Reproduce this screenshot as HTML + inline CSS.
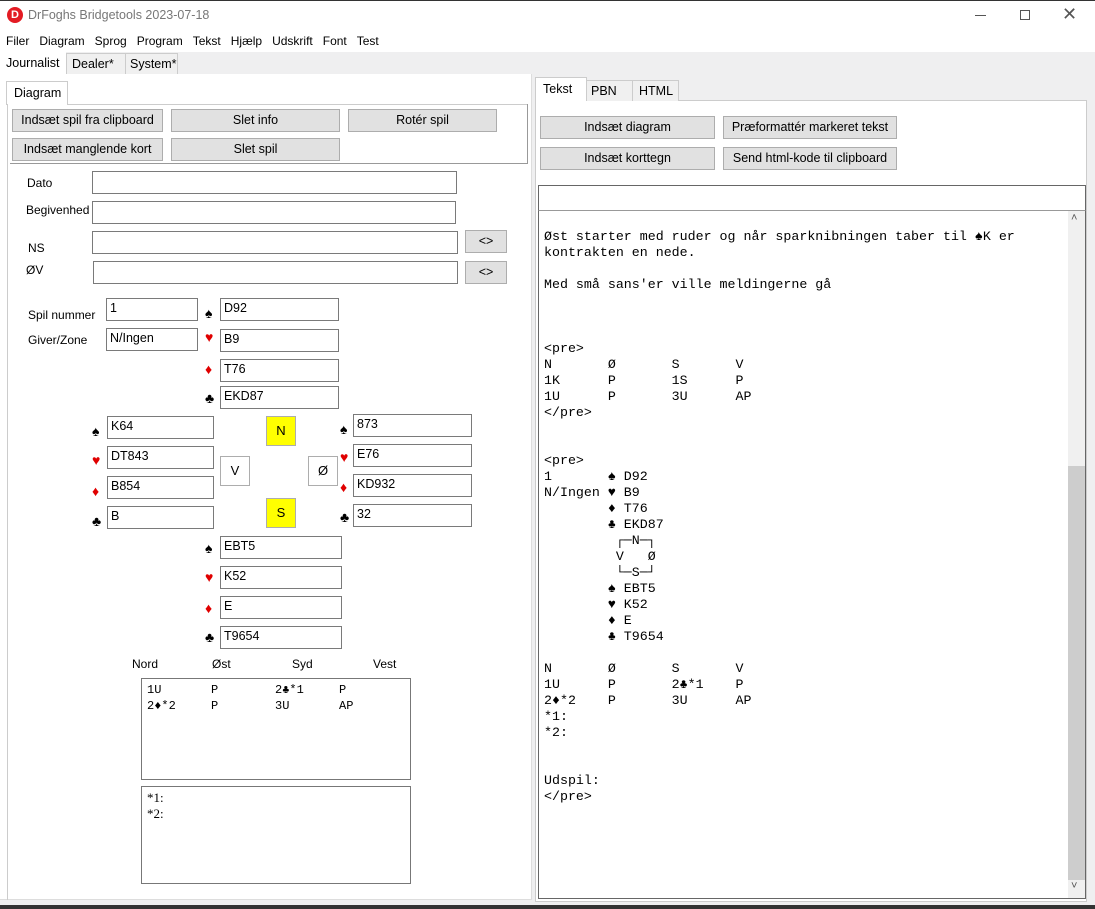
<!DOCTYPE html>
<html><head><meta charset="utf-8"><style>
*{margin:0;padding:0;box-sizing:border-box}
body{width:1095px;height:909px;position:relative;overflow:hidden;background:#efeff0;font-family:"Liberation Sans",Tahoma,sans-serif;font-size:12px;color:#000}
.a{position:absolute}
.t{position:absolute;white-space:nowrap}
.in{position:absolute;background:#fff;border:1px solid #7a7a7a;padding:2px 3px;font-size:12.5px}
.btn{position:absolute;background:#e1e1e1;border:1px solid #adadad;text-align:center;font-size:12.5px;line-height:20px}
.su{position:absolute;font-size:14px;line-height:14px}
.r{color:#e00000}
.mono{font-family:"Liberation Mono","Courier New",monospace;font-size:13.3px;line-height:16px;white-space:pre}
.box{position:absolute;width:30px;height:30px;border:1px solid #adadad;background:#fff;text-align:center;line-height:28px;font-size:13px}
</style></head><body>
<div class="a" style="left:0;top:0;width:1095px;height:52px;background:#fff"></div>
<div class="a" style="left:0;top:0;width:1095px;height:1px;background:#333"></div>
<div class="a" style="left:7px;top:7px;width:16px;height:16px;border-radius:50%;background:#e31b23;color:#fff;font-weight:bold;font-size:11px;text-align:center;line-height:16px">D</div>
<div class="t" style="left:28px;top:8px;font-size:12.5px;color:#777">DrFoghs Bridgetools 2023-07-18</div>
<div class="a" style="left:975px;top:15px;width:11px;height:1px;background:#555"></div>
<div class="a" style="left:1020px;top:10px;width:10px;height:10px;border:1px solid #555"></div>
<div class="t" style="left:1062px;top:4px;font-size:18px;color:#555;font-weight:lighter">✕</div>
<div class="t" style="left:6px;top:34px;font-size:12px">Filer&nbsp;&nbsp;&nbsp;Diagram&nbsp;&nbsp;&nbsp;Sprog&nbsp;&nbsp;&nbsp;Program&nbsp;&nbsp;&nbsp;Tekst&nbsp;&nbsp;&nbsp;Hjælp&nbsp;&nbsp;&nbsp;Udskrift&nbsp;&nbsp;&nbsp;Font&nbsp;&nbsp;&nbsp;Test</div>
<!-- top tabs -->
<div class="a" style="left:0;top:52px;width:66px;height:24px;background:#fff"></div>
<div class="t" style="left:6px;top:56px;font-size:12.5px">Journalist</div>
<div class="a" style="left:66px;top:53px;width:60px;height:21px;border:1px solid #ccc;border-bottom:none;background:#f0f0f0"></div>
<div class="t" style="left:72px;top:57px;font-size:12.5px">Dealer*</div>
<div class="a" style="left:125px;top:53px;width:53px;height:21px;border:1px solid #ccc;border-bottom:none;background:#f0f0f0"></div>
<div class="t" style="left:130px;top:57px;font-size:12.5px">System*</div>
<!-- left panel -->
<div class="a" style="left:0;top:74px;width:532px;height:826px;background:#fff;border-right:1px solid #ddd;border-bottom:1px solid #ddd"></div>
<div class="a" style="left:6px;top:81px;width:62px;height:24px;border:1px solid #ccc;border-bottom:none;background:#fff"></div>
<div class="t" style="left:14px;top:86px;font-size:12.5px">Diagram</div>
<div class="a" style="left:7px;top:104px;width:1px;height:796px;background:#ccc"></div>
<div class="a" style="left:68px;top:104px;width:460px;height:1px;background:#ccc"></div>
<div class="a" style="left:10px;top:163px;width:518px;height:1px;background:#999"></div>
<div class="a" style="left:527px;top:104px;width:1px;height:60px;background:#999"></div>
<div class="btn" style="left:12px;top:109px;width:151px;height:23px">Indsæt spil fra clipboard</div>
<div class="btn" style="left:171px;top:109px;width:169px;height:23px">Slet info</div>
<div class="btn" style="left:348px;top:109px;width:149px;height:23px">Rotér spil</div>
<div class="btn" style="left:12px;top:138px;width:151px;height:23px">Indsæt manglende kort</div>
<div class="btn" style="left:171px;top:138px;width:169px;height:23px">Slet spil</div>
<div class="t" style="left:27px;top:176px">Dato</div>
<div class="in" style="left:92px;top:171px;width:365px;height:23px"></div>
<div class="t" style="left:26px;top:203px">Begivenhed</div>
<div class="in" style="left:92px;top:201px;width:364px;height:23px"></div>
<div class="t" style="left:28px;top:241px">NS</div>
<div class="in" style="left:92px;top:231px;width:366px;height:23px"></div>
<div class="btn" style="left:465px;top:230px;width:42px;height:23px;line-height:20px">&lt;&gt;</div>
<div class="t" style="left:26px;top:263px">ØV</div>
<div class="in" style="left:93px;top:261px;width:365px;height:23px"></div>
<div class="btn" style="left:465px;top:261px;width:42px;height:23px;line-height:20px">&lt;&gt;</div>
<div class="t" style="left:28px;top:308px">Spil nummer</div>
<div class="in" style="left:106px;top:298px;width:92px;height:23px">1</div>
<div class="t" style="left:28px;top:333px">Giver/Zone</div>
<div class="in" style="left:106px;top:328px;width:92px;height:23px">N/Ingen</div>
<!-- north -->
<div class="su" style="left:205px;top:306px">♠</div><div class="in" style="left:220px;top:298px;width:119px;height:23px">D92</div>
<div class="su r" style="left:205px;top:330px">♥</div><div class="in" style="left:220px;top:329px;width:119px;height:23px">B9</div>
<div class="su r" style="left:205px;top:362px">♦</div><div class="in" style="left:220px;top:359px;width:119px;height:23px">T76</div>
<div class="su" style="left:205px;top:391px">♣</div><div class="in" style="left:220px;top:386px;width:119px;height:23px">EKD87</div>
<!-- west -->
<div class="su" style="left:92px;top:424px">♠</div><div class="in" style="left:107px;top:416px;width:107px;height:23px">K64</div>
<div class="su r" style="left:92px;top:453px">♥</div><div class="in" style="left:107px;top:446px;width:107px;height:23px">DT843</div>
<div class="su r" style="left:92px;top:484px">♦</div><div class="in" style="left:107px;top:476px;width:107px;height:23px">B854</div>
<div class="su" style="left:92px;top:514px">♣</div><div class="in" style="left:107px;top:506px;width:107px;height:23px">B</div>
<!-- east -->
<div class="su" style="left:340px;top:422px">♠</div><div class="in" style="left:353px;top:414px;width:119px;height:23px">873</div>
<div class="su r" style="left:340px;top:450px">♥</div><div class="in" style="left:353px;top:444px;width:119px;height:23px">E76</div>
<div class="su r" style="left:340px;top:480px">♦</div><div class="in" style="left:353px;top:474px;width:119px;height:23px">KD932</div>
<div class="su" style="left:340px;top:510px">♣</div><div class="in" style="left:353px;top:504px;width:119px;height:23px">32</div>
<!-- south -->
<div class="su" style="left:205px;top:541px">♠</div><div class="in" style="left:220px;top:536px;width:122px;height:23px">EBT5</div>
<div class="su r" style="left:205px;top:570px">♥</div><div class="in" style="left:220px;top:566px;width:122px;height:23px">K52</div>
<div class="su r" style="left:205px;top:601px">♦</div><div class="in" style="left:220px;top:596px;width:122px;height:23px">E</div>
<div class="su" style="left:205px;top:630px">♣</div><div class="in" style="left:220px;top:626px;width:122px;height:23px">T9654</div>
<div class="box" style="left:266px;top:416px;background:#ffff00">N</div>
<div class="box" style="left:220px;top:456px">V</div>
<div class="box" style="left:308px;top:456px">Ø</div>
<div class="box" style="left:266px;top:498px;background:#ffff00">S</div>
<div class="t" style="left:132px;top:657px">Nord</div>
<div class="t" style="left:212px;top:657px">Øst</div>
<div class="t" style="left:292px;top:657px">Syd</div>
<div class="t" style="left:373px;top:657px">Vest</div>
<div class="a" style="left:141px;top:678px;width:270px;height:102px;border:1px solid #777;background:#fff"></div>
<div class="a mono" style="left:147px;top:682px;font-size:12px;line-height:16px">1U</div>
<div class="a mono" style="left:211px;top:682px;font-size:12px;line-height:16px">P</div>
<div class="a mono" style="left:275px;top:682px;font-size:12px;line-height:16px">2♣*1</div>
<div class="a mono" style="left:339px;top:682px;font-size:12px;line-height:16px">P</div>
<div class="a mono" style="left:147px;top:698px;font-size:12px;line-height:16px">2♦*2</div>
<div class="a mono" style="left:211px;top:698px;font-size:12px;line-height:16px">P</div>
<div class="a mono" style="left:275px;top:698px;font-size:12px;line-height:16px">3U</div>
<div class="a mono" style="left:339px;top:698px;font-size:12px;line-height:16px">AP</div>
<div class="a" style="left:141px;top:786px;width:270px;height:98px;border:1px solid #777;background:#fff"></div>
<div class="t" style="left:147px;top:790px;font-family:'Liberation Serif',serif;font-size:13px;line-height:16px">*1:<br>*2:</div>
<!-- right panel -->
<div class="a" style="left:535px;top:100px;width:552px;height:802px;background:#fff;border:1px solid #ccc"></div>
<div class="a" style="left:535px;top:77px;width:52px;height:24px;border:1px solid #ccc;border-bottom:none;background:#fff"></div>
<div class="t" style="left:543px;top:82px;font-size:12.5px">Tekst</div>
<div class="a" style="left:586px;top:80px;width:47px;height:21px;border:1px solid #ccc;border-bottom:none;background:#f0f0f0"></div>
<div class="t" style="left:591px;top:84px;font-size:12.5px">PBN</div>
<div class="a" style="left:632px;top:80px;width:47px;height:21px;border:1px solid #ccc;border-bottom:none;background:#f0f0f0"></div>
<div class="t" style="left:639px;top:84px;font-size:12.5px">HTML</div>
<div class="btn" style="left:540px;top:116px;width:175px;height:23px">Indsæt diagram</div>
<div class="btn" style="left:723px;top:116px;width:174px;height:23px">Præformattér markeret tekst</div>
<div class="btn" style="left:540px;top:147px;width:175px;height:23px">Indsæt korttegn</div>
<div class="btn" style="left:723px;top:147px;width:174px;height:23px">Send html-kode til clipboard</div>
<div class="a" style="left:538px;top:185px;width:548px;height:26px;border:1px solid #666;background:#fff"></div>
<div class="a" style="left:538px;top:210px;width:548px;height:689px;border:1px solid #666;border-top:1px solid #999;background:#fff"></div>
<div class="a" style="left:1068px;top:211px;width:17px;height:687px;background:#f0f0f0"></div>
<div class="a" style="left:1068px;top:466px;width:17px;height:414px;background:#cdcdcd"></div>
<div class="t" style="left:1071px;top:212px;font-size:11px;color:#555">˄</div>
<div class="t" style="left:1071px;top:880px;font-size:11px;color:#555">˅</div>
<div class="a mono" style="left:544px;top:229px">Øst starter med ruder og når sparknibningen taber til ♠K er
kontrakten en nede.

Med små sans'er ville meldingerne gå



&lt;pre&gt;
N       Ø       S       V
1K      P       1S      P
1U      P       3U      AP
&lt;/pre&gt;


&lt;pre&gt;
1       ♠ D92
N/Ingen ♥ B9
        ♦ T76
        ♣ EKD87
         ┌─N─┐
         V   Ø
         └─S─┘
        ♠ EBT5
        ♥ K52
        ♦ E
        ♣ T9654

N       Ø       S       V
1U      P       2♣*1    P
2♦*2    P       3U      AP
*1:
*2:


Udspil:
&lt;/pre&gt;</div>
<div class="a" style="left:0;top:905px;width:1095px;height:4px;background:#333"></div>
</body></html>
